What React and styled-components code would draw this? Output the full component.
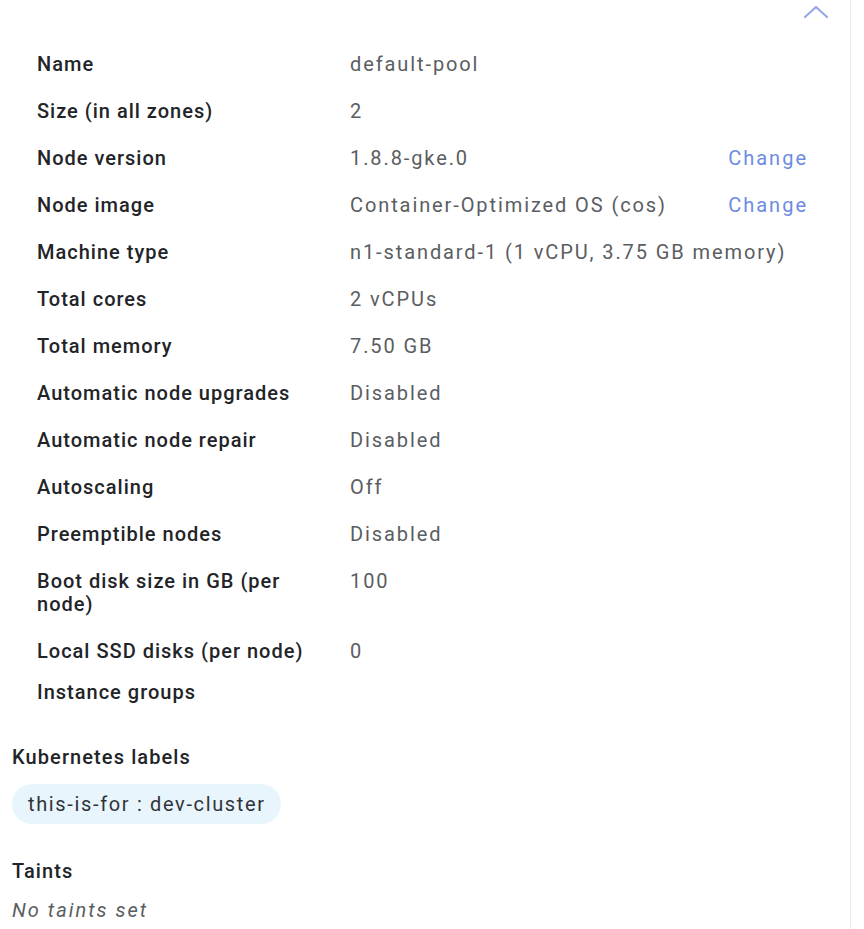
import React from 'react';
import { styled, createGlobalStyle } from 'styled-components';

const GlobalStyle = createGlobalStyle`
  html, body {
    margin: 0;
    padding: 0;
    background: #ffffff;
  }
  body {
    font-family: Roboto, "Liberation Sans", Arial, sans-serif;
    -webkit-font-smoothing: antialiased;
  }
`;

const rows = [
  { label: 'Name', value: 'default-pool' },
  { label: 'Size (in all zones)', value: '2' },
  { label: 'Node version', value: '1.8.8-gke.0', action: 'Change' },
  { label: 'Node image', value: 'Container-Optimized OS (cos)', action: 'Change' },
  { label: 'Machine type', value: 'n1-standard-1 (1 vCPU, 3.75 GB memory)' },
  { label: 'Total cores', value: '2 vCPUs' },
  { label: 'Total memory', value: '7.50 GB' },
  { label: 'Automatic node upgrades', value: 'Disabled' },
  { label: 'Automatic node repair', value: 'Disabled' },
  { label: 'Autoscaling', value: 'Off' },
  { label: 'Preemptible nodes', value: 'Disabled' },
  { label: 'Boot disk size in GB (per node)', value: '100' },
  { label: 'Local SSD disks (per node)', value: '0' },
  { label: 'Instance groups', value: '', compact: true },
];

function ChevronUp() {
  return (
    <svg width="26" height="14" viewBox="0 0 26 14" fill="none">
      <path d="M2 12 L13 2 L24 12" stroke="#95a7e4" strokeWidth="2.2" strokeLinecap="round" strokeLinejoin="round" />
    </svg>
  );
}

export default function App() {
  return (
    <Panel>
      <GlobalStyle />
      <Header>
        <CollapseButton aria-label="Collapse">
          <ChevronUp />
        </CollapseButton>
      </Header>
      <Details>
        {rows.map((row) => (
          <Row key={row.label} $compact={row.compact}>
            <Label>{row.label}</Label>
            <Value>{row.value}</Value>
            {row.action && <Action>{row.action}</Action>}
          </Row>
        ))}
      </Details>
      <Section>
        <SectionTitle>Kubernetes labels</SectionTitle>
        <Chip>this-is-for : dev-cluster</Chip>
      </Section>
      <Section $gap={36}>
        <SectionTitle>Taints</SectionTitle>
        <Empty>No taints set</Empty>
      </Section>
    </Panel>
  );
}

const Panel = styled.div`
  width: 851px;
  min-height: 929px;
  box-sizing: border-box;
  border-right: 1px solid #ececec;
  background: #ffffff;
`;

const Header = styled.div`
  display: flex;
  justify-content: flex-end;
  align-items: center;
  height: 24px;
  padding-right: 21px;
`;

const CollapseButton = styled.button`
  display: flex;
  align-items: center;
  justify-content: center;
  padding: 0;
  border: none;
  background: none;
  cursor: pointer;
`;

const Details = styled.div`
  display: flex;
  flex-direction: column;
  padding: 17px 44px 0 37px;
`;

const Row = styled.div`
  display: grid;
  grid-template-columns: 289px 1fr auto;
  column-gap: 24px;
  align-items: start;
  padding: ${({ $compact }) => ($compact ? '6px 0' : '12px 0')};
  font-size: 20px;
  line-height: 23px;
`;

const Label = styled.div`
  color: #222428;
  font-weight: 500;
  letter-spacing: 1px;
`;

const Value = styled.div`
  color: #5a5d61;
  font-weight: 400;
  letter-spacing: 1.9px;
  white-space: nowrap;
`;

const Action = styled.a`
  color: #6d8be0;
  font-weight: 400;
  letter-spacing: 2px;
  margin-right: -2px;
  cursor: pointer;
`;

const Section = styled.div`
  display: flex;
  flex-direction: column;
  align-items: flex-start;
  padding: 0 12px;
  margin-top: ${({ $gap }) => $gap ?? 36}px;
`;

const SectionTitle = styled.div`
  font-size: 20px;
  line-height: 23px;
  font-weight: 500;
  letter-spacing: 1.1px;
  color: #222428;
`;

const Chip = styled.div`
  margin-top: 15px;
  padding: 8px 15px 8px 16px;
  border-radius: 20px;
  background: #e9f5fc;
  color: #303338;
  font-size: 20px;
  line-height: 24px;
  letter-spacing: 1.65px;
`;

const Empty = styled.div`
  margin-top: 16px;
  font-size: 20px;
  line-height: 23px;
  font-style: italic;
  letter-spacing: 2px;
  color: #5a5d61;
`;
